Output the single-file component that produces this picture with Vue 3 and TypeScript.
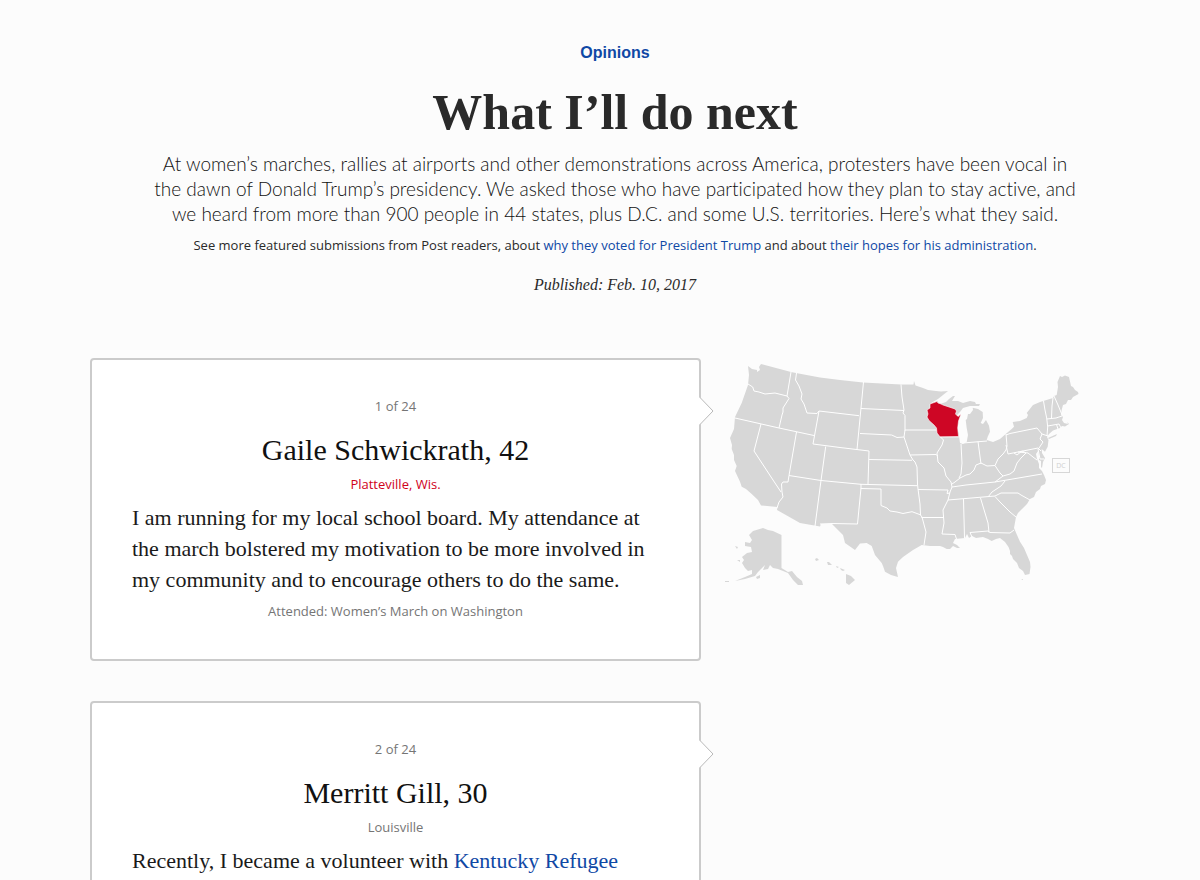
<script setup lang="ts">
interface Part {
  text: string
  href?: string
}

interface Submission {
  name: string
  age: number
  place: string
  active: boolean
  body: Part[]
  attended?: string
}

const total = 24

const submissions: Submission[] = [
  {
    name: 'Gaile Schwickrath',
    age: 42,
    place: 'Platteville, Wis.',
    active: true,
    body: [
      {
        text: 'I am running for my local school board. My attendance at the march bolstered my motivation to be more involved in my community and to encourage others to do the same.',
      },
    ],
    attended: 'Women’s March on Washington',
  },
  {
    name: 'Merritt Gill',
    age: 30,
    place: 'Louisville',
    active: false,
    body: [
      { text: 'Recently, I became a volunteer with ' },
      { text: 'Kentucky Refugee', href: '#kentucky-refugee' },
    ],
  },
]

const mainland =
  'M748 366L752 369L757 370L757 372L760 370L759 367L761 364L791 372L796 373L820 377.500L840 380L863 382.500L901 384.500L913.500 384.500L914 381L915.500 385.500L923 388L928 390L936 391L941 391.500L948 391L943 395L938 399L932 402.500L930 404L937 401L940 404L946 402L949 399L953 396L955 396L952 401L958 401L963 403L970 401L975 402L976 404L980 404L979 406L974 406L970 406L963 408L960 412L957 415L957 418L961 414L958 421L957.700 428L959 436L960 443L962.700 444L966.700 442L968 435L966.700 428L965.700 420L967 419L968 414L970 414L973 410L972.700 407.700L978 409L982.700 412L983 418L980.700 423L983 424L986 420L989 425.700L990 431.700L987.700 436.700L986.700 440L993 442L1000 439L1005.700 434L1011.700 429L1014 426.700L1012.700 422L1020 421L1026.700 418L1028 415L1026.700 413L1033 405L1040 402L1053 398L1054 396L1056.700 395L1058 387L1057.500 382L1060 376L1062 377L1065 375.500L1069 377L1071 386L1073 387L1075 390L1078 392L1078.500 394L1073 397L1071 400L1068 400L1066 404L1063 405L1061.700 410L1061 415L1063 417L1062 420L1064 423L1068 424L1067 422L1069 424L1065 426.500L1062 426L1060 428L1053 430.500L1049 434L1047 437L1048.500 440L1047.700 446.700L1045 451.700L1041.700 449L1042 453L1045 458L1043 462L1042 468L1041 467L1041 461L1039 460L1039 456L1038 451L1036 454L1037 459L1039 464L1039 468L1042 471L1044 475L1046 480L1045 484L1041 486L1040 489L1036 492L1034 497L1030 499L1027 504L1022 509L1018 513L1016 517L1014 528L1017 535L1020 541.700L1024 548L1027 555L1030 562L1030.500 567L1029.500 574L1025 575L1023 571L1019 568L1017 563L1013 559L1012 556L1010 554L1010 551L1008.500 547L1005 542L1000 538L996 539L991.700 541L988 539L983 537L976 538L972 536L969 538L967 534L965 538L955 539L953 543L957 545L960 548L957 548L953 546L950 549L946.700 549L943 547L940 546L930 546L921.700 545L913 550L903 557L898 561.700L896 568L898 577L891 575L885 571.700L883 566L881.700 563L875 555L871.700 546L866.700 543L860 543.500L855 550L845 543L843 535L832 524L821 524L820 526.500L800 523L777 510L777.500 507L761 505.500L758 500L751.700 494L746 489L741.700 486.700L740 481.700L735 471L736.700 466L734 460L734 455L731.700 449L732 445L730 438L734 429L735 417L741.700 403L748 385L749 375Z'

const wisconsin =
  'M930 404L937 401.500L938 403L941 404L943 405L946 406L955 409L956.500 411L955.500 414L958 416.500L961 414L958.500 421L957.700 428L958.500 436.500L940 436.800L937 433L936.500 428L934 425L929 420.500L927 417L928 414L927 410L930 408Z'

const borders = [
  'M748 384L752.700 387L754 391L759 392L765 394L775 393L787 396',
  'M791 372L787 396L789 398.500L783 408L783 412L782 415L779 428',
  'M735 418L779 428L814 435.500',
  'M761 424L754 451L773 480L781 492',
  'M796.500 432L789 475.500L788 482L783 482L781.500 484L782 492L783 497L779 502L777 508',
  'M789 475.500L821 480.500L861 484.300L917 485.700',
  'M796.500 373L795.500 380L799 386L802 394L801 399L804 404L807 413L817 413.500L819 411L859 415.700',
  'M819 411L813 444L840 447.500L869 451',
  'M825.700 446.500L821 480.500L815 526',
  'M863.500 382L857 449.500',
  'M861 408.500L904 410.500',
  'M901 384.500L902 397L904 410L903 413L905 415.500L905 430.500',
  'M860 433.500L891.700 435L897 437.500L904 437',
  'M905 430L937 430L938 433',
  'M905 430L904 437L907 446L910 455L913 460L915 462L917 467L917.500 484L918 489L920 504L920.500 515L922 517L926 532L924 545',
  'M869 459.500L912 460.300',
  'M869 451L868 484',
  'M910 455L936 454.500L938 456',
  'M940 436.500L943.500 440L942 445L937 453L938 462L944 468L946 476L951 482L952 487L950 492L948 500L943 510L944 523L942 534L955 534.500L956.500 539',
  'M940 436.800L959 436.800',
  'M961 444L962 463L961 474L959 478',
  'M978 441.500L981 464',
  'M963 443L987 441',
  'M952 484L955 482L960 478L966 475L970 474L974 470L976 465L981 463L987 466L995 465.500L998 459L1003 454L1006 450L1007 446L1006 434',
  'M995 465.500L1000 473L1003 476L1010 474L1014 471L1017 463L1021 458L1026 453L1022 451L1017 455L1014 453',
  'M1006 445L1008 454L1038 448L1041 451',
  'M1006 435L1010 433.500L1037 428L1042 434L1040 439L1043 442L1039 448',
  'M1042 434L1048 436',
  'M1018 452L1028 453L1033 457L1037 460',
  'M1038 449L1040 459L1044 459',
  'M1043.500 401L1045 410L1046.700 418L1047.700 427L1047 436',
  'M1053 398L1052 406L1051.500 418',
  'M1054 396L1058 405L1061.700 414',
  'M1046.700 419L1056 418L1062 416',
  'M1047.700 426L1059 424L1061 428',
  'M1056.500 424.500L1058 429',
  'M952 487L966 485L995 482L1042 474',
  'M948 500L995 496L1001 493L1018 493L1021 495L1030 500',
  'M988 497L992 492L1001 486L1005 481',
  'M995 482L1003 476',
  'M995 496.500L1000 502L1010 512L1016 517',
  'M963.500 499L964.500 538',
  'M980.500 498L988 523L989 532.500',
  'M972 537L970 532.500L988 531L990 532.500L1010 533L1014 530',
  'M918 489.500L948 490L947 493.500L950 493',
  'M921.500 517.500L944 517.500',
  'M861 484L861 488.500L881 489L881 505.500L887 508L890 511L897 512L903 513.500L912 511.700L921 515',
  'M861 488L857.500 524L832 523.500L820 524',
]

const islands = [
  'M763 528L768 530L773 531L781.500 535L781.500 568L788 572L792 571L797 577L802 581L803 585L798 585L793 580L788 573L778 569L773 568L770 565L768 569L763 570L765 565L758 572L755 576L745 579L735 581L745 577L752 574L752 570L748 571L745 568L742 563L744 560L742 557L747 553L752 552L751 547L745 546L745 542L750 543L752 540L749 535L753 531Z',
  'M756 577L760 575L760 578L757 579Z',
  'M735 546L738 547L737 549Z',
  'M737 560L740 560L740 562Z',
  'M725 581L729 581L729 582L725 582Z',
  'M815 559L817 558L819 560L816 561Z',
  'M827 562L829 562L832 565L828 565Z',
  'M836 566L839 567L837 568Z',
  'M840 568L845 570L843 571L841 570Z',
  'M846 574L851 576L855 580L849 585L846 583Z',
  'M1048 438L1057 434L1056 436L1049 439Z',
  'M1021 580L1023 579L1023 580Z',
]
</script>

<template>
  <div class="page">
    <header class="intro">
      <a class="section" href="#opinions">Opinions</a>
      <h1>What I’ll do next</h1>
      <p class="lede">
        At women’s marches, rallies at airports and other demonstrations across America, protesters have been vocal in
        the dawn of Donald Trump’s presidency. We asked those who have participated how they plan to stay active, and
        we heard from more than 900 people in 44 states, plus D.C. and some U.S. territories. Here’s what they said.
      </p>
      <p class="more">
        See more featured submissions from Post readers, about
        <a href="#why-they-voted">why they voted for President Trump</a> and about
        <a href="#their-hopes">their hopes for his administration</a>.
      </p>
      <p class="published">Published: Feb. 10, 2017</p>
    </header>

    <main class="content">
      <div class="cards">
        <article v-for="(item, index) in submissions" :key="item.name" class="card">
          <svg class="pointer" viewBox="0 0 15 28" aria-hidden="true">
            <path class="pointer-fill" d="M0 0.500L1 0.500L14 14L1 27.500L0 27.500Z" />
            <path class="pointer-line" d="M1 0.500L14 14L1 27.500" />
          </svg>
          <p class="count">{{ index + 1 }} of {{ total }}</p>
          <h2>{{ item.name }}, {{ item.age }}</h2>
          <p class="place" :class="{ active: item.active }">{{ item.place }}</p>
          <p class="body">
            <template v-for="part in item.body" :key="part.text">
              <a v-if="part.href" :href="part.href">{{ part.text }}</a>
              <template v-else>{{ part.text }}</template>
            </template>
          </p>
          <p v-if="item.attended" class="attended">Attended: {{ item.attended }}</p>
        </article>
      </div>

      <svg class="map" viewBox="725 358 356 235" role="img" aria-label="Map of the United States with Wisconsin highlighted">
        <path class="land" :d="mainland" />
        <path v-for="d in islands" :key="d" class="land" :d="d" />
        <path v-for="d in borders" :key="d" class="border" :d="d" />
        <path class="highlight" :d="wisconsin" />
        <rect class="dc-box" x="1052.500" y="458.500" width="17" height="14" />
        <text class="dc-text" x="1061" y="468" text-anchor="middle">DC</text>
      </svg>
    </main>
  </div>
</template>

<style>
body {
  margin: 0;
  background: #fcfcfc;
}
</style>

<style scoped>
.page {
  box-sizing: border-box;
  height: 100vh;
  overflow: hidden;
  padding: 42px 5% 0 7.5%;
  background: #fcfcfc;
  color: #2a2a2a;
  font-family: "Open Sans", "Liberation Sans", sans-serif;
}

h1,
h2,
p {
  margin: 0;
}

a {
  color: #0f48a5;
  text-decoration: none;
}

.intro {
  display: flex;
  flex-direction: column;
  align-items: center;
  text-align: center;
}

.section {
  font-family: "Liberation Sans", Arial, sans-serif;
  font-size: 16px;
  font-weight: 700;
  line-height: 22px;
}

h1 {
  margin-top: 20px;
  font-family: "Liberation Serif", "Times New Roman", serif;
  font-size: 50px;
  font-weight: 700;
  line-height: 56px;
}

.lede {
  max-width: 930px;
  margin-top: 11px;
  color: #111;
  font-family: Lato, "Liberation Sans", sans-serif;
  font-size: 19px;
  font-variant-ligatures: none;
  font-weight: 300;
  line-height: 25px;
}

.more {
  margin-top: 8px;
  font-size: 13px;
  line-height: 22px;
}

.published {
  margin-top: 18px;
  font-family: "Liberation Serif", "Times New Roman", serif;
  font-size: 16px;
  font-style: italic;
  line-height: 22px;
}

.content {
  display: grid;
  grid-template-columns: 53fr 36fr;
  gap: 24px;
  align-items: start;
  margin-top: 62px;
}

.cards {
  display: flex;
  flex-direction: column;
  gap: 40px;
}

.card {
  position: relative;
  box-sizing: border-box;
  min-height: 303px;
  padding: 34px 40px;
  border: 2px solid #cbcbcb;
  border-radius: 4px;
  background: #fff;
  text-align: center;
}

.pointer {
  position: absolute;
  top: 37px;
  left: 100%;
  width: 15px;
  height: 28px;
}

.pointer-fill {
  fill: #fff;
}

.pointer-line {
  fill: none;
  stroke: #b9b9b9;
}

.count,
.place,
.attended {
  color: #757575;
  font-size: 13px;
  line-height: 24px;
}

h2 {
  margin-top: 12px;
  color: #111;
  font-family: "Liberation Serif", "Times New Roman", serif;
  font-size: 30px;
  font-weight: 400;
  line-height: 40px;
}

.place {
  margin-top: 2px;
}

.place.active {
  color: #d0021b;
}

.body {
  margin-top: 6px;
  color: #1a1a1a;
  font-family: "Liberation Serif", "Times New Roman", serif;
  font-size: 22px;
  line-height: 31px;
  text-align: left;
}

.attended {
  margin-top: 4px;
}

.map {
  width: 100%;
  max-width: 356px;
}

.land {
  fill: #d7d7d7;
}

.border {
  fill: none;
  stroke: #fff;
  stroke-linejoin: round;
}

.highlight {
  fill: #ce0625;
  stroke: #fff;
  stroke-width: 0.6;
}

.dc-box {
  fill: none;
  stroke: #d7d7d7;
}

.dc-text {
  fill: #d0d0d0;
  font-size: 7px;
}
</style>
